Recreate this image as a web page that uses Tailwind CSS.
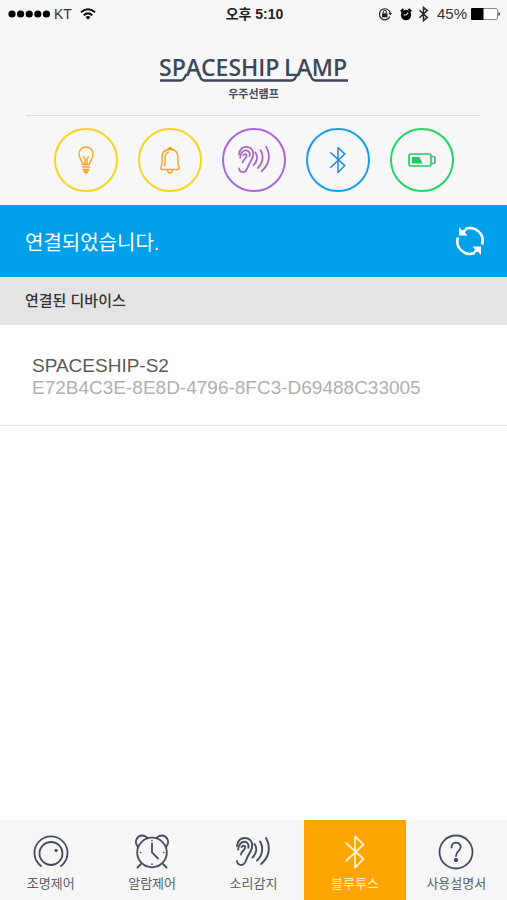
<!DOCTYPE html>
<html lang="ko">
<head>
<meta charset="utf-8">
<meta name="viewport" content="width=device-width, initial-scale=1">
<title>SPACESHIP LAMP</title>
<script src="https://cdn.jsdelivr.net/npm/@tailwindcss/browser@4"></script>
</head>
<body class="min-h-screen flex flex-col bg-white font-['Liberation_Sans','Noto_Sans_CJK_KR',sans-serif] text-[#333]">

<svg class="hidden" aria-hidden="true">
  <symbol id="ear" viewBox="0 0 36 32">
    <g fill="none" stroke="currentColor" stroke-width="1.900" stroke-linecap="round" stroke-linejoin="round">
      <path d="M2 10C2.500 4.500 6 1.500 10.500 2c5 .5 7.500 4.500 6.500 9.500-.8 4-3.700 7-5.200 11-1.100 3.200-2.500 6.500-5.300 6.500-2.300 0-4.200-1.500-4.500-4"/>
      <path d="M3.200 13.500C3.500 8.500 6.500 5.300 10 5.800c3 .6 4 3.200 3.300 6"/>
      <path d="M6 18.500C6.500 14.500 10 14.500 10.200 11.500 10.300 9.500 8 9 6.500 11"/>
      <path d="M19.500 8c3 4 2 10-2 13.500"/>
      <path d="M25 5.500c3.800 6 2.500 14-3 19"/>
      <path d="M31 2c5 9 3.500 19-5 26"/>
    </g>
  </symbol>
  <symbol id="bluetooth" viewBox="0 0 20 34">
    <path d="M1 8 18.500 24 10 32.500V1.500L18.500 9.500 1 26" fill="none" stroke="currentColor" stroke-width="1.800" stroke-linecap="round" stroke-linejoin="round"/>
  </symbol>
</svg>

<div class="bg-[#f7f7f7]">
  <div class="grid grid-cols-[1fr_auto_1fr] items-center h-7 px-2 pr-1.5 text-black">
    <div class="flex items-center">
      <svg class="w-[42px] h-2" viewBox="0 0 42 8"><g fill="#000"><circle cx="4" cy="4" r="3.600"/><circle cx="12.600" cy="4" r="3.600"/><circle cx="21.200" cy="4" r="3.600"/><circle cx="29.800" cy="4" r="3.600"/><circle cx="38.400" cy="4" r="3.600"/></g></svg>
      <span class="ml-1 text-sm text-[#333]">KT</span>
      <svg class="ml-2 w-4 h-3" viewBox="0 0 16 12"><g fill="none" stroke="#111" stroke-width="2"><path d="M1 4.300Q8-1.800 15 4.300"/><path d="M3.700 7.300Q8 3.500 12.300 7.300"/></g><path d="M5.500 9Q8 7 10.500 9L8 11.800Z" fill="#111"/></svg>
    </div>
    <span class="text-sm font-bold text-[#222]">오후 5:10</span>
    <div class="flex items-center justify-end">
      <svg class="w-[14px] h-[14px]" viewBox="0 0 14 14"><path d="M12 9.500A5.500 5.500 0 1 1 12.300 6" fill="none" stroke="#222" stroke-width="1.200"/><path d="M10.700 6h3.300l-1.700 2.500Z" fill="#222"/><rect x="4" y="6.300" width="5.500" height="4" fill="#222"/><path d="M5.200 6.500V5a1.600 1.600 0 0 1 3.200 0v1.500" fill="none" stroke="#222"/></svg>
      <svg class="ml-2 w-[12px] h-[13px]" viewBox="0 0 12 13"><circle cx="6" cy="7" r="5.200" fill="#000"/><path d="M.8 3.500 3.500 1M11.200 3.500 8.500 1" stroke="#000" stroke-width="2"/><path d="M8.300 4.500 6 7H3.500" fill="none" stroke="#fff" stroke-width="1.100"/></svg>
      <svg class="ml-1.5 w-[11px] h-4 text-[#222]" viewBox="0 0 9 15"><path d="M.7 4 8 10.700 4.500 13.700V1.300L8 4.300.7 11" fill="none" stroke="currentColor" stroke-width="1.400"/></svg>
      <span class="ml-2 text-[15px] text-[#333]">45%</span>
      <svg class="ml-1 w-[30px] h-3" viewBox="0 0 30 12"><rect x=".5" y=".5" width="26" height="11" rx="1.500" fill="#fff" stroke="#888"/><path d="M1 0h11.500v12H1a1 1 0 0 1-1-1V1a1 1 0 0 1 1-1Z" fill="#000"/><path d="M27.500 4q3 2 0 4Z" fill="#222"/></svg>
    </div>
  </div>

  <header class="px-[26px] text-center">
    <h1 class="pt-[26px]">
      <svg class="mx-auto w-[190px] h-7 block overflow-visible" viewBox="0 0 190 28" role="img" aria-label="SPACESHIP LAMP">
        <g font-family="'Open Sans','Noto Sans',sans-serif" font-weight="600" font-size="23" fill="#3d475a">
          <text x="0" y="22">SPACESHIP</text>
          <text x="125" y="22">LAMP</text>
        </g>
        <path d="M1 26.500H21Q24 26.500 25.300 24L27.500 20M40 20 41.700 24Q43 26.500 46 26.500H132Q135 26.500 136.300 24L138.500 20M151 20 152.700 24Q154 26.500 157 26.500H189" fill="none" stroke="#3d475a" stroke-width="2.400"/>
      </svg>
      <span class="block text-[11px] leading-4 mt-1 font-bold text-[#444c5c]">우주선램프</span>
    </h1>
    <hr class="mt-[13px] border-[#dedede]">
    <div class="flex justify-center gap-5 pt-3 pb-[13px]">
      <button aria-label="조명" class="size-16 flex items-center justify-center rounded-full border-2 border-[#f9d423] text-[#f6a324]">
        <svg class="w-4 h-7" viewBox="0 0 16 28" fill="none" stroke="currentColor" stroke-width="1.400" stroke-linecap="round" stroke-linejoin="round"><path d="M4.500 18.500C4.500 14.500 1 13 1 8a7 7 0 0 1 14 0c0 5-3.500 6.500-3.500 10.500Z"/><path d="M7 18V13L5.500 10.500M9 18V13l1.500-2.500M4.500 21h7M5 23.500h6"/><path d="M6 25h4L8 27.500Z" fill="currentColor"/></svg>
      </button>
      <button aria-label="알람" class="size-16 flex items-center justify-center rounded-full border-2 border-[#f9d423] text-[#f6a324]">
        <svg class="w-[22px] h-7" viewBox="0 0 22 28" fill="none" stroke="currentColor" stroke-width="1.400" stroke-linecap="round" stroke-linejoin="round"><path d="M2.500 23.500C.5 22 3 20 3 17V11C3 6 6 3.500 11 3.500S19 6 19 11v6c0 3 2.500 5 .5 6.500Z"/><path d="M9 3.200Q11-.5 13 3.200Z" fill="currentColor"/><path d="M8.500 24q.3 3 2.500 3t2.500-3M9.500 6C6.800 7 6 9 6 12v4c0 2-.4 3-.8 4"/></svg>
      </button>
      <button aria-label="소리" class="size-16 flex items-center justify-center rounded-full border-2 border-[#a868d8] text-[#a868c8]">
        <svg class="w-[34px] h-[30px]"><use href="#ear"/></svg>
      </button>
      <button aria-label="블루투스" class="size-16 flex items-center justify-center rounded-full border-2 border-[#1a9ee8] text-[#1787e0]">
        <svg class="w-4 h-7"><use href="#bluetooth"/></svg>
      </button>
      <button aria-label="배터리" class="size-16 flex items-center justify-center rounded-full border-2 border-[#24d366] text-[#24c964]">
        <svg class="w-7 h-[14px]" viewBox="0 0 28 14" fill="none" stroke="currentColor" stroke-width="1.600"><rect x="1" y="1" width="22" height="12" rx="2"/><path d="M23.500 3.500h2q1.500 0 1.500 1.500v4q0 1.500-1.500 1.500h-2"/><path d="M4 4h7.500l3 6.500H4Z" fill="currentColor" stroke="none"/></svg>
      </button>
    </div>
  </header>
</div>

<main class="flex-1">
  <section class="flex items-center justify-between h-[72px] px-[25px] pr-[22px] bg-[#009fe9] text-white">
    <p class="pt-1 text-[20px]">연결되었습니다.</p>
    <button aria-label="새로고침">
      <svg class="w-[30px] h-[30px] block" viewBox="0 0 30 30"><g fill="none" stroke="#fff" stroke-width="2.600"><path d="M10 3.300A12.500 12.500 0 0 1 27 18.500"/><path d="M20 26.700A12.500 12.500 0 0 1 3 11.500"/></g><path d="M4 1V9.500H12.500L10 6.500 12 3 7 4.200Z" fill="#fff"/><path d="M26 29V20.500H17.500L20 23.500 18 27 23 25.800Z" fill="#fff"/></svg>
    </button>
  </section>
  <h2 class="flex items-center h-12 px-[25px] bg-[#e4e4e4] border-t border-white text-[15px] font-medium text-[#333]">연결된 디바이스</h2>
  <ul>
    <li class="border-b border-[#e8e8e8] px-8 pt-[30px] pb-[26px]">
      <p class="text-[19px] leading-[22px] text-[#5a5a5a]">SPACESHIP-S2</p>
      <p class="text-[19px] leading-[22px] text-[#b0b0b0]">E72B4C3E-8E8D-4796-8FC3-D69488C33005</p>
    </li>
  </ul>
</main>

<nav class="grid grid-cols-5 h-20 bg-[#f6f6f6] text-[13px] leading-5 text-[#5a5f6a]">
  <a href="#light" class="flex flex-col items-center gap-1 pt-[14px]">
    <svg class="w-9 h-9 text-[#454c60]" viewBox="0 0 36 36" fill="none" stroke="currentColor" stroke-width="1.800" stroke-linecap="round"><circle cx="18" cy="19.500" r="11.500"/><path d="M8 32A16.500 16.500 0 1 1 28 32"/><circle cx="23" cy="16.500" r="1.200" fill="currentColor" stroke-width="1"/></svg>
    <span>조명제어</span>
  </a>
  <a href="#alarm" class="flex flex-col items-center gap-1 pt-[14px]">
    <svg class="w-9 h-9 text-[#454c60]" viewBox="0 0 36 36" fill="none" stroke="currentColor" stroke-width="1.800" stroke-linecap="round"><circle cx="18" cy="18.500" r="14.800"/><path d="M4 13C-.5 8 3 1.500 8.500 1.500c2 0 3.500.8 4.700 2.200M32 13c4.500-5 1-11.500-4.500-11.500-2 0-3.500.8-4.700 2.200M7 30l-3.500 3.500M29 30l3.500 3.500M18 9.500v9l6 6"/><path d="M18 6.500v.3M18 30v.3M6.500 18.500h.3M29.500 18.500h.3" stroke-width="1.500"/></svg>
    <span>알람제어</span>
  </a>
  <a href="#sound" class="flex flex-col items-center gap-1 pt-[14px]">
    <svg class="w-9 h-9 text-[#454c60]"><use href="#ear"/></svg>
    <span>소리감지</span>
  </a>
  <a href="#bluetooth-page" aria-current="page" class="flex flex-col items-center gap-1 pt-[14px] bg-[#ffa500] text-[#fff0d0]">
    <svg class="w-5 h-9"><use href="#bluetooth"/></svg>
    <span>블루투스</span>
  </a>
  <a href="#manual" class="flex flex-col items-center gap-1 pt-[14px]">
    <svg class="w-9 h-9 text-[#454c60]" viewBox="0 0 36 36" fill="none" stroke="currentColor" stroke-width="1.800" stroke-linecap="round"><circle cx="18" cy="18" r="16.500"/><path d="M13.500 13.500C13.500 7 22.700 7.300 22.700 13c0 4-4.700 4.500-4.700 9"/><circle cx="18" cy="26" r="1.700" fill="currentColor" stroke-width="1"/></svg>
    <span>사용설명서</span>
  </a>
</nav>
</body>
</html>
